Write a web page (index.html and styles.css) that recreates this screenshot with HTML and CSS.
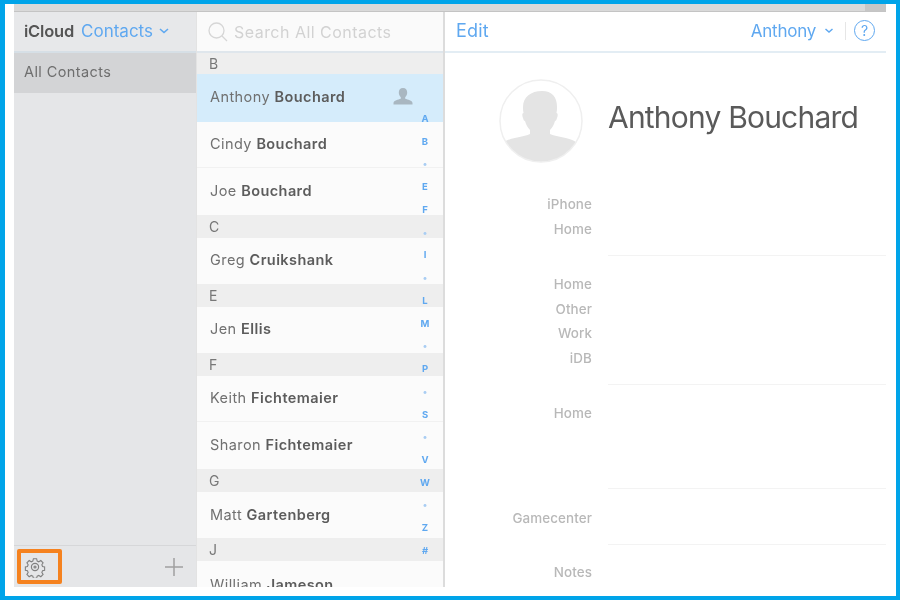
FILE: index.html
```html
<!DOCTYPE html>
<html lang="en">
<head>
<meta charset="utf-8">
<title>iCloud Contacts</title>
<link rel="stylesheet" href="styles.css">
</head>
<body>
<div class="frame">
  <div class="page">
    <div class="topbar"><span class="topbar-tab"></span></div>
    <div class="app">
      <aside class="groups">
        <header class="groups-head">
          <span class="brand">iCloud</span>
          <span class="app-name">Contacts</span>
          <svg class="chev" width="10" height="6" viewBox="0 0 10 6"><path d="M1 1l4 3.5L9 1" fill="none" stroke="#5fa8f0" stroke-width="1.6"/></svg>
        </header>
        <div class="group-row">All Contacts</div>
        <div class="groups-space"></div>
        <footer class="groups-foot">
          <svg class="gear" width="22" height="22" viewBox="0 0 22 22" fill="none" stroke="#808080" stroke-width="1.2">
            <path d="M9.2 1.8h3.6l.6 2.6 1.8.8 2.3-1.4 2.5 2.5-1.4 2.3.8 1.8 2.3.6v3.6l-2.3.6-.8 1.8 1.4 2.3-2.5 2.5-2.3-1.4-1.8.8-.6 2.3H9.2l-.6-2.3-1.8-.8-2.3 1.4-2.5-2.5 1.4-2.3-.8-1.8-2.3-.6v-3.600l2.3-.6.8-1.8-1.4-2.3 2.5-2.5 2.3 1.4 1.8-.8z" transform="translate(1.1 1.1) scale(.9)"/>
            <circle cx="11" cy="11" r="3.6"/>
            <circle cx="11" cy="11" r="1" />
          </svg>
          <svg class="plus" width="20" height="20" viewBox="0 0 20 20"><path d="M10 1v18M1 10h18" stroke="#a0a0a0" stroke-width="1.5"/></svg>
        </footer>
      </aside>

      <section class="list">
        <header class="search">
          <svg width="22" height="22" viewBox="0 0 22 22" fill="none" stroke="#d6d6d6" stroke-width="1.3"><circle cx="9.5" cy="9.5" r="7.5"/><path d="M15 15l5 5"/></svg>
          <span>Search All Contacts</span>
        </header>
        <div class="scroll">
          <div class="sec sec-first">B</div>
          <div class="row row-sel"><span>Anthony <b>Bouchard</b></span>
            <svg class="me" width="20" height="19" viewBox="0 0 20 19"><path d="M10 1c2.8 0 4.2 2 4.2 4.6 0 2-.9 3.6-2 4.6v1.6c2.6.8 7 1.700 7.300 4.200v1.500H.5V16c.3-2.500 4.700-3.400 7.300-4.200v-1.600c-1.100-1-2-2.600-2-4.600C5.800 3 7.200 1 10 1z" fill="#a9b7c1"/></svg>
          </div>
          <div class="row row-line row-cindy"><span>Cindy <b>Bouchard</b></span></div>
          <div class="row row-joe"><span>Joe <b>Bouchard</b></span></div>
          <div class="sec">C</div>
          <div class="row"><span>Greg <b>Cruikshank</b></span></div>
          <div class="sec">E</div>
          <div class="row"><span>Jen <b>Ellis</b></span></div>
          <div class="sec">F</div>
          <div class="row row-line"><span>Keith <b>Fichtemaier</b></span></div>
          <div class="row row-joe"><span>Sharon <b>Fichtemaier</b></span></div>
          <div class="sec">G</div>
          <div class="row row-low"><span>Matt <b>Gartenberg</b></span></div>
          <div class="sec">J</div>
          <div class="row row-last"><span>William <b>Jameson</b></span></div>
        </div>
        <nav class="index">
          <span>A</span><span>B</span><span class="dot">•</span><span>E</span><span>F</span><span class="dot">•</span><span>I</span><span class="dot">•</span><span>L</span><span>M</span><span class="dot">•</span><span>P</span><span class="dot">•</span><span>S</span><span class="dot">•</span><span>V</span><span>W</span><span class="dot">•</span><span>Z</span><span>#</span>
        </nav>
      </section>

      <main class="detail">
        <header class="detail-bar">
          <span class="edit">Edit</span>
          <span class="user">Anthony</span>
          <svg class="chev-user" width="10" height="6" viewBox="0 0 10 6"><path d="M1.500 1l3.500 3 3.500-3" fill="none" stroke="#5fa8f0" stroke-width="1.500"/></svg>
          <span class="bar-div"></span>
          <span class="help">?</span>
        </header>
        <div class="card-head">
          <svg class="avatar" width="84" height="84" viewBox="0 0 84 84">
            <defs><clipPath id="round"><circle cx="42" cy="42" r="41"/></clipPath></defs>
            <g clip-path="url(#round)"><path d="M43 12c10 0 15 6 15 16 0 2 0 4-.5 6 1.500 0 1.500 3 .5 5-.5 2-1 3-2 3-1 4-3 7-5 9v4c6 3 18 3 26 8v21H5V63c8-5 20-5 26-8v-4c-2-2-4-5-5-9-1 0-1.500-1-2-3-1-2-1-5 .5-5-.5-2-.5-4-.5-6 0-10 8-16 19-16z" fill="#e4e4e4"/></g>
            <circle cx="42" cy="42" r="41" fill="none" stroke="#efefef" stroke-width="1.500"/>
          </svg>
          <h1 class="name">Anthony Bouchard</h1>
        </div>
        <div class="fields fields-a"><div class="labels"><div>iPhone</div><div>Home</div></div><div class="values"></div></div>
        <div class="fields fields-b"><div class="labels"><div>Home</div><div>Other</div><div>Work</div><div>iDB</div></div><div class="values"></div></div>
        <div class="fields fields-c"><div class="labels"><div>Home</div></div><div class="values"></div></div>
        <div class="fields fields-d"><div class="labels"><div>Gamecenter</div></div><div class="values"></div></div>
        <div class="fields fields-e"><div class="labels"><div>Notes</div></div></div>
      </main>
    </div>
    <span class="highlight"></span>
  </div>
</div>
</body>
</html>
```

FILE: styles.css
```css
* { box-sizing: border-box; }
html, body { margin: 0; height: 100%; }
body { font-family: Inter, "Liberation Sans", sans-serif; overflow: hidden; }

.frame { width: 900px; height: 600px; background: #00a4e9; padding: 4px 4px 4px 5px; }
.page { position: relative; height: 592px; background: #fff; padding: 0 10px 9px 9px; display: flex; flex-direction: column; }

.topbar { height: 8px; flex: none; background: #d9d9d9; border-bottom: 1px solid #c4c4c4; display: flex; justify-content: flex-end; filter: blur(.4px); }
.topbar-tab { width: 21px; background: #c6c6c6; }

.app { flex: 1; min-height: 0; display: flex; overflow: hidden; filter: blur(.7px); }

.groups { width: 182px; flex: none; background: #e5e6e8; display: flex; flex-direction: column; }
.groups-head { height: 41px; flex: none; display: flex; align-items: center; padding: 0 0 2px 10px; font-size: 16.5px; background: #e7e8ea; border-bottom: 2px solid #d6dfe6; }
.brand { font-weight: 600; color: #555; letter-spacing: -.2px; }
.app-name { color: #5fa8f0; margin-left: 7px; font-size: 17px; letter-spacing: 0; }
.chev { margin-left: 6px; }
.group-row { height: 40px; flex: none; background: #d3d4d6; color: #6e6e6e; font-size: 14.5px; padding: 0 10px 3px; display: flex; align-items: center; letter-spacing: .4px; }
.groups-space { flex: 1; }
.groups-foot { height: 42px; flex: none; border-top: 1px solid #d6d7d9; display: flex; align-items: center; justify-content: space-between; padding: 0 12px 0 10px; }

.list { position: relative; width: 249px; flex: none; border-left: 1px solid #e3e3e3; border-right: 2px solid #dcdcdc; display: flex; flex-direction: column; background: #fbfbfb; }
.search { height: 41px; flex: none; display: flex; align-items: center; gap: 5px; padding: 0 0 0 10px; background: #fafafa; border-bottom: 2px solid #dfe6ec; color: #d2d2d2; font-size: 16px; letter-spacing: .47px; }
.scroll { flex: 1; min-height: 0; overflow: hidden; }
.sec { height: 23px; background: #eeeeee; color: #777; font-size: 14px; padding: 0 0 0 12px; display: flex; align-items: center; }
.sec-first { height: 21px; }
.row { height: 46px; display: flex; align-items: center; justify-content: space-between; padding: 0 30px 3px 13px; color: #707070; font-size: 14.5px; letter-spacing: .42px; }
.row b { font-weight: 600; color: #5c5c5c; }
.row-sel { height: 48px; background: #d5ecfb; }
.row-line { box-shadow: inset 0 -1px 0 0 #f1f1f1; }
.row-joe { height: 47px; }
.row-low { padding-bottom: 1px; }
.row-last { padding-bottom: 0; }

.index { position: absolute; top: 102px; right: 10px; width: 16px; height: 442px; display: flex; flex-direction: column; justify-content: space-between; align-items: center; color: #5fa8f0; font-size: 9.5px; font-weight: 700; line-height: 10px; }
.index span { height: 10px; }
.index .dot { color: #a9cdf3; }

.detail { flex: 1; min-width: 0; background: #fff; display: flex; flex-direction: column; }
.detail-bar { height: 41px; flex: none; display: flex; align-items: center; padding: 0 11px 2px 11px; border-bottom: 2px solid #e3edf4; color: #5fa8f0; }
.edit { font-size: 18px; flex: 1; letter-spacing: .2px; }
.user { font-size: 17px; letter-spacing: -.25px; }
.chev-user { margin-left: 8px; }
.bar-div { width: 1px; height: 18px; background: #e6e6e6; margin: 0 8px 0 11px; }
.help { width: 21px; height: 21px; border: 1.5px solid #5fa8f0; border-radius: 50%; display: flex; align-items: center; justify-content: center; font-size: 14px; }

.card-head { height: 139px; flex: none; display: flex; align-items: flex-start; padding: 26px 0 0 54px; }
.avatar { flex: none; }
.name { margin: 18px 0 0 25px; font-size: 30px; font-weight: 400; color: #5a5a5a; letter-spacing: -.8px; line-height: 40px; white-space: nowrap; }

.fields { display: flex; flex: none; }
.labels { width: 147px; flex: none; text-align: right; color: #b8b8b8; font-size: 13.4px; font-weight: 500; letter-spacing: .1px; }
.labels div { height: 24.6px; line-height: 24.6px; }
.values { flex: 1; margin-left: 16px; border-bottom: 1px solid #f3f3f3; }
.fields-a { height: 64px; }
.fields-b { height: 129px; padding-top: 16px; }
.fields-b .values { margin-top: -16px; }
.fields-c { height: 104px; padding-top: 16px; }
.fields-c .values { margin-top: -16px; }
.fields-d { height: 56px; padding-top: 17px; }
.fields-d .values { margin-top: -17px; }
.fields-e { padding-top: 15px; }

.highlight { position: absolute; left: 12px; top: 545px; width: 45px; height: 35px; border: 4px solid #f5821f; border-radius: 2px; }
```
